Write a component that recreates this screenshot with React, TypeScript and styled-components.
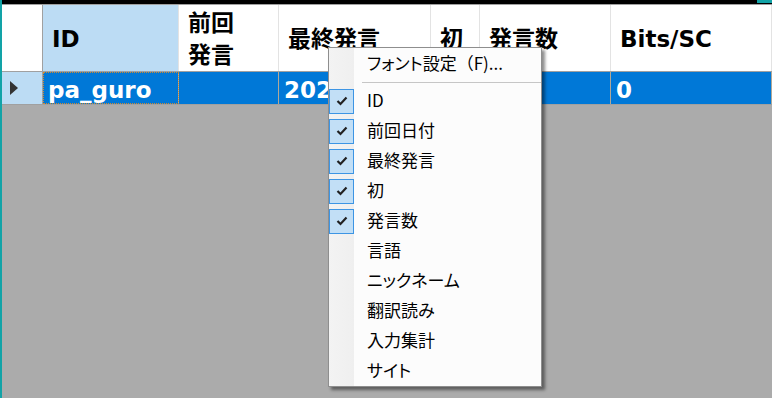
import styled, { createGlobalStyle } from "styled-components";

const GlobalStyle = createGlobalStyle`
  html, body {
    margin: 0;
    padding: 0;
    width: 772px;
    height: 398px;
    overflow: hidden;
    background: #ababab;
  }
`;

const Frame = styled.div`
  position: relative;
  width: 772px;
  height: 398px;
  background: #ababab;
  border-left: 2px solid #12a3a7;
  box-sizing: border-box;
  font-family: "DejaVu Sans", "Noto Sans CJK JP", sans-serif;
`;

const TopBar = styled.div`
  height: 4px;
  background: #000;
  border-bottom: 1px solid #a0a0a0;
  display: flex;
  justify-content: flex-end;
`;

const TopAccent = styled.div`
  width: 15px;
  height: 3px;
  background: #12a3a7;
`;

const COLS = "41px 136px 100px 152px 49px 131px 1fr";

const HeaderRow = styled.div`
  display: grid;
  grid-template-columns: ${COLS};
  height: 66px;
  background: #fff;
  border-bottom: 1px solid #a0a0a0;
`;

const HeaderCell = styled.div<{ $active?: boolean; $corner?: boolean }>`
  display: flex;
  align-items: center;
  padding-left: 9px;
  padding-top: 2px;
  background: ${(p) => (p.$active ? "#bcdcf4" : "#fff")};
  border-right: 1px solid ${(p) => (p.$corner ? "#a0a0a0" : "#e3e3e3")};
  font-size: 23px;
  font-weight: bold;
  line-height: 32px;
  color: #000;
  white-space: pre-line;
`;

const DataRow = styled.div`
  display: grid;
  grid-template-columns: ${COLS};
  height: 32px;
  border-bottom: 1px solid #a0a0a0;
`;

const RowHeader = styled.div`
  background: #bcdcf4;
  border-right: 1px solid #a0a0a0;
  display: flex;
  align-items: center;
  padding-left: 8px;
`;

const Arrow = styled.div`
  width: 0;
  height: 0;
  border-top: 7px solid transparent;
  border-bottom: 7px solid transparent;
  border-left: 8px solid #333;
`;

const DataCell = styled.div<{ $focus?: boolean }>`
  display: flex;
  align-items: center;
  padding-left: 5px;
  padding-top: 3px;
  background: #0078d7;
  color: #fff;
  font-size: 23px;
  font-weight: bold;
  border-right: 1px solid #b0a898;
  box-sizing: border-box;
  outline: ${(p) => (p.$focus ? "1px dotted #d08a30" : "none")};
  outline-offset: -1px;
`;

const Menu = styled.div`
  position: absolute;
  left: 326px;
  top: 47px;
  width: 214px;
  box-sizing: border-box;
  padding: 1px 0 0;
  border: 1px solid #8e8e8e;
  background: linear-gradient(to right, #f3f3f3 0, #efefef 25px, #fcfcfc 25px);
  box-shadow: 3px 3px 3px rgba(0, 0, 0, 0.45);
  font-family: "Noto Sans CJK JP", sans-serif;
  font-feature-settings: "palt";
  font-size: 17px;
  color: #000;
`;

const MenuItem = styled.div`
  display: flex;
  align-items: center;
  height: 30px;
`;

const CheckSlot = styled.div`
  width: 26px;
  height: 30px;
  display: flex;
  align-items: center;
  flex: none;
`;

const CheckBox = styled.div`
  width: 25px;
  height: 25px;
  box-sizing: border-box;
  background: #c2dff6;
  border: 1px solid #3d95e4;
  display: flex;
  align-items: center;
  justify-content: center;
`;

const Label = styled.span`
  margin-left: 12px;
  margin-top: -3px;
  line-height: 1;
`;

const FullParen = styled.span`
  font-feature-settings: normal;
`;

const Separator = styled.div`
  height: 1px;
  margin: 3px 0 3px 33px;
  background: #c6c6c6;
`;

const Check = () => (
  <svg width="12" height="10" viewBox="0 0 12 10">
    <polyline points="1.5,5 4.5,8 10.5,1.5" fill="none" stroke="#222" strokeWidth="2.2" />
  </svg>
);

const items: [string, boolean][] = [
  ["ID", true],
  ["前回日付", true],
  ["最終発言", true],
  ["初", true],
  ["発言数", true],
  ["言語", false],
  ["ニックネーム", false],
  ["翻訳読み", false],
  ["入力集計", false],
  ["サイト", false],
];

export default function App() {
  return (
    <>
      <GlobalStyle />
      <Frame>
        <TopBar>
          <TopAccent />
        </TopBar>
        <HeaderRow>
          <HeaderCell $corner />
          <HeaderCell $active>ID</HeaderCell>
          <HeaderCell>{"前回\n発言"}</HeaderCell>
          <HeaderCell>最終発言</HeaderCell>
          <HeaderCell>初</HeaderCell>
          <HeaderCell>発言数</HeaderCell>
          <HeaderCell>Bits/SC</HeaderCell>
        </HeaderRow>
        <DataRow>
          <RowHeader>
            <Arrow />
          </RowHeader>
          <DataCell $focus>pa_guro</DataCell>
          <DataCell />
          <DataCell>2021</DataCell>
          <DataCell />
          <DataCell />
          <DataCell>0</DataCell>
        </DataRow>
        <Menu>
          <MenuItem>
            <CheckSlot />
            <Label>
              フォント設定<FullParen>（</FullParen>F)...
            </Label>
          </MenuItem>
          <Separator />
          {items.map(([name, on]) => (
            <MenuItem key={name}>
              <CheckSlot>
                {on && (
                  <CheckBox>
                    <Check />
                  </CheckBox>
                )}
              </CheckSlot>
              <Label>{name}</Label>
            </MenuItem>
          ))}
        </Menu>
      </Frame>
    </>
  );
}
